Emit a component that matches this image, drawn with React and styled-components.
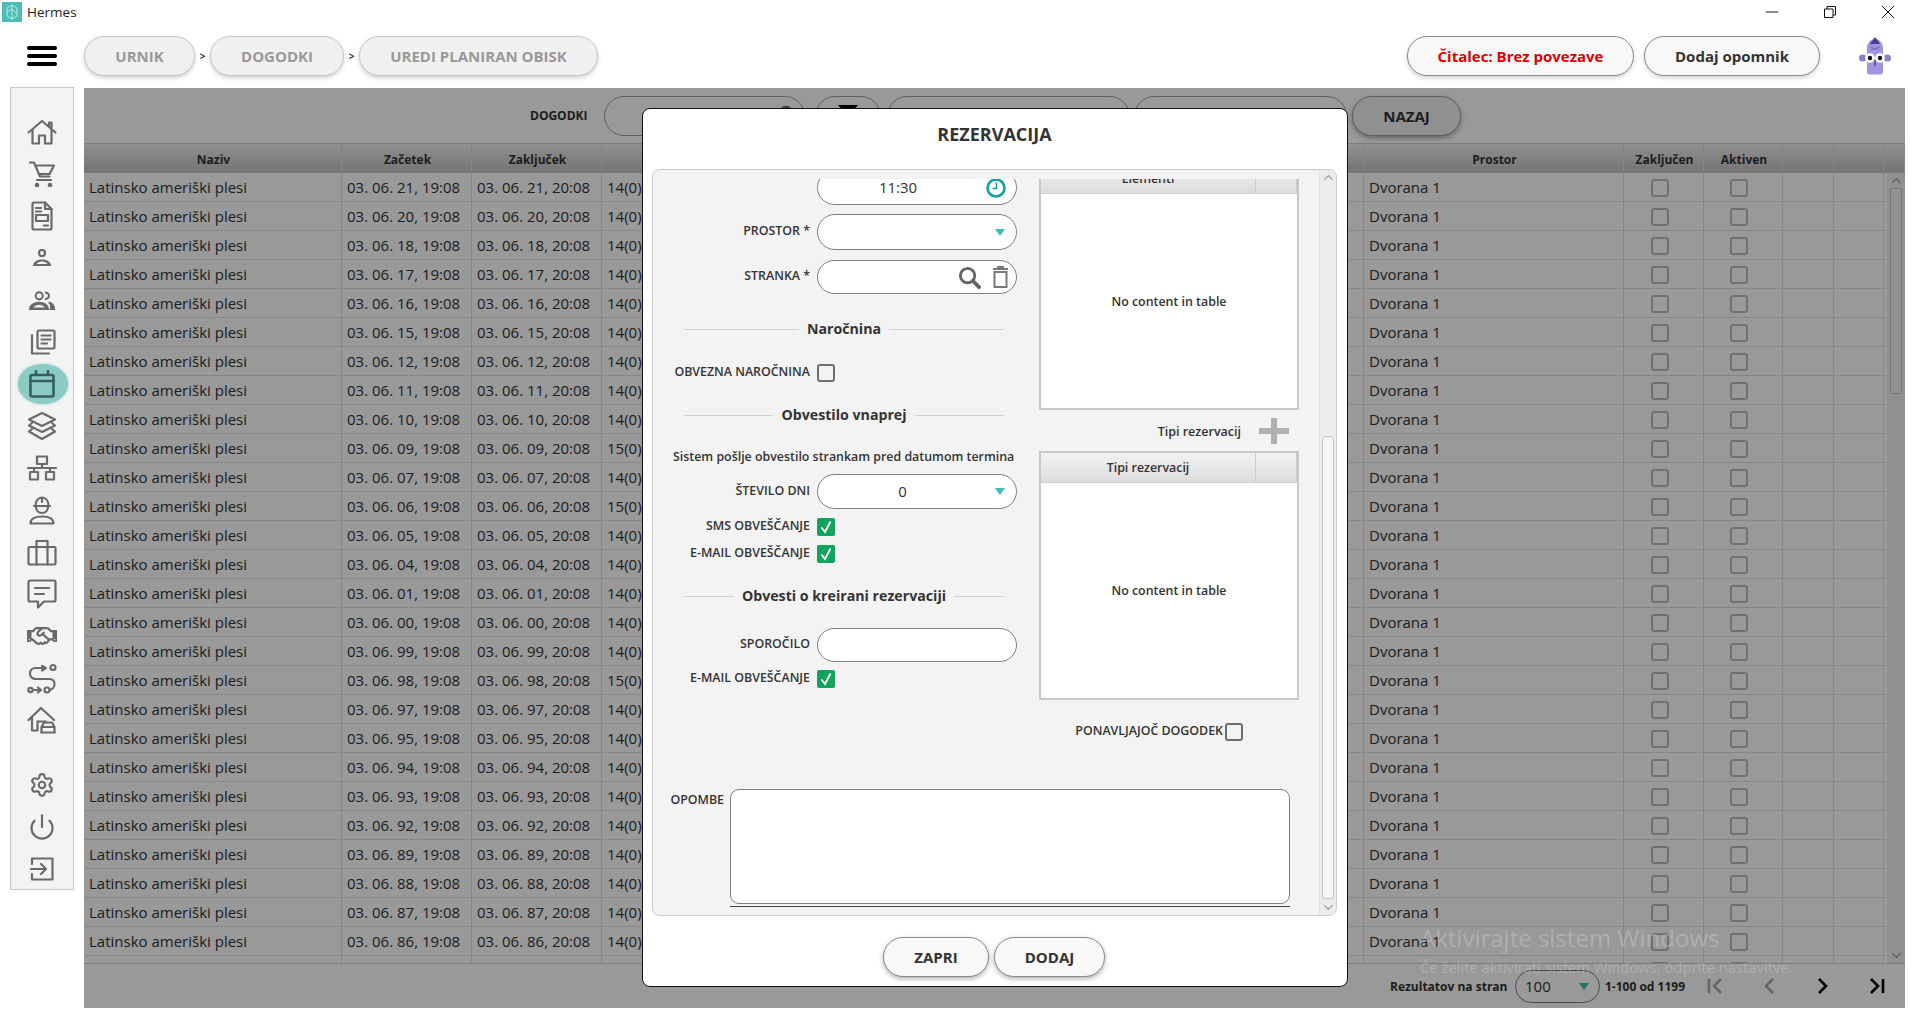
import React from 'react'
import styled, { createGlobalStyle } from 'styled-components'
import { FaRegHandshake } from 'react-icons/fa'
import { Settings, Power, ChevronUp, ChevronDown } from 'lucide-react'

const GlobalStyle = createGlobalStyle`
  html, body {
    margin: 0;
    background: #fff;
    overflow: hidden;
  }
  * {
    box-sizing: border-box;
  }
  body {
    font-family: 'Open Sans', 'Liberation Sans', sans-serif;
    color: #333;
  }
`

const Page = styled.div`
  display: flex;
  flex-direction: column;
  height: 1023px;
  position: relative;
  width: 1919px;
`

const TitleBar = styled.header`
  align-items: center;
  display: flex;
  flex: 0 0 24px;
  font-size: 13.5px;
  gap: 5px;
  padding: 0 2px;
  color: #222;
`

const WindowControls = styled.div`
  display: flex;
  margin-left: auto;
`

const WindowButton = styled.span`
  align-items: center;
  color: #111;
  display: flex;
  height: 24px;
  justify-content: center;
  width: 58px;
`

const Toolbar = styled.div`
  align-items: center;
  display: flex;
  flex: 0 0 64px;
  padding: 0 28px 0 27px;
`

const Hamburger = styled.div`
  display: flex;
  flex-direction: column;
  gap: 3.5px;
  margin-right: 27px;
  width: 30px;
`

const HamburgerBar = styled.span`
  background: #000;
  border-radius: 3px;
  height: 4.5px;
`

const Pill = styled.div`
  align-items: center;
  background: ${p => (p.$muted ? '#f0f0f0' : '#f8f8f8')};
  border: 1px solid ${p => (p.$muted ? '#c6c6c6' : '#8a8a8a')};
  border-radius: 22px;
  box-shadow: 0 2px 4px rgba(0, 0, 0, 0.18);
  color: ${p => p.$color || '#333'};
  display: flex;
  flex: 0 0 ${p => p.$width}px;
  font-size: 15px;
  font-weight: 700;
  height: 40px;
  justify-content: center;
`

const Crumb = styled.span`
  font-size: 10px;
  font-weight: 700;
  text-align: center;
  width: 15px;
`

const ToolbarRight = styled.div`
  align-items: center;
  display: flex;
  gap: 10px;
  margin-left: auto;
`

const Mascot = styled.svg`
  display: block;
  margin-left: 29px;
`

const Body = styled.div`
  display: flex;
  flex: 1;
  min-height: 0;
  padding: 0 14px 15px 10px;
`

const Sidebar = styled.nav`
  background: #f3f3f3;
  border: 1px solid #c8c8c8;
  flex: 0 0 64px;
  height: 803px;
  margin-right: 10px;
  margin-top: -1px;
  padding-top: 23px;
`

const NavGroup = styled.div`
  margin-top: ${p => p.$top || 0}px;
`

const NavItem = styled.div`
  align-items: center;
  color: #6a6a6a;
  display: flex;
  height: 42px;
  justify-content: center;
  position: relative;
  ${p =>
    p.$active &&
    `
    color: #35605e;
    &::before {
      background: #8ccac6;
      border-radius: 50%;
      box-shadow: 0 0 3px rgba(80, 160, 155, 0.5);
      content: '';
      height: 40px;
      left: 6.5px;
      position: absolute;
      top: 1px;
      width: 50px;
    }
    svg { position: relative; }
  `}
`

const Icon = styled.svg`
  display: block;
  fill: none;
  stroke: currentColor;
  stroke-linecap: round;
  stroke-linejoin: round;
  stroke-width: 2.2;
`

const Content = styled.main`
  background: #fff;
  display: flex;
  flex: 1;
  flex-direction: column;
  position: relative;
`

const FilterBar = styled.div`
  align-items: center;
  display: flex;
  flex: 0 0 55px;
  padding-left: 446px;
`

const FilterLabel = styled.span`
  font-size: 12px;
  font-weight: 700;
  margin-right: 17px;
  width: 57px;
`

const FilterBox = styled.div`
  align-items: flex-start;
  background: #fff;
  border: 1px solid #9e9e9e;
  border-radius: 20px;
  color: #9a9a9a;
  display: flex;
  flex: 0 0 ${p => p.$width}px;
  height: 40px;
  justify-content: ${p => p.$justify || 'flex-start'};
  margin-right: ${p => p.$right || 0}px;
  padding: 8px 7px 0;
`

const BackButton = styled(Pill)`
  background: #f0f0f0;
  border-color: #9e9e9e;
  box-shadow: 0 2px 5px rgba(0, 0, 0, 0.35);
  font-size: 15px;
  margin-left: 5px;
`

const columns = '258px 130px 130px 130px 632px 260px 80px 79px 51px 50px 21px'

const TableHead = styled.div`
  background: linear-gradient(#f0f0f0, #c2c2c2);
  border-bottom: 1px solid #c6c6c6;
  border-top: 1px solid #d0d0d0;
  display: grid;
  flex: 0 0 30px;
  grid-template-columns: ${columns};
`

const HeadCell = styled.div`
  align-items: center;
  border-right: 1px solid #dcdcdc;
  display: flex;
  font-size: 12px;
  font-weight: 700;
  justify-content: center;
  padding: 3px 0 0 2px;
`

const TableBody = styled.div`
  flex: 0 0 790px;
  overflow: hidden;
  position: relative;
`

const Row = styled.div`
  border-bottom: 1px solid #e2e2e2;
  display: grid;
  grid-template-columns: ${columns};
  height: 29px;
`

const Cell = styled.div`
  align-items: center;
  border-right: 1px solid #e2e2e2;
  display: flex;
  font-size: 15px;
  justify-content: ${p => (p.$center ? 'center' : 'flex-start')};
  overflow: hidden;
  padding: ${p => (p.$center ? '1px 8px 0 0' : '0 0 0 5px')};
  white-space: nowrap;
`

const TableScroll = styled.div`
  align-items: center;
  background: #f0f0f0;
  bottom: 0;
  color: #9a9a9a;
  display: flex;
  flex-direction: column;
  position: absolute;
  right: 0;
  top: 0;
  width: 18px;
`

const ScrollThumb = styled.div`
  background: #f6f6f6;
  border: 1px solid #c4c4c4;
  border-radius: 3px;
  flex: 0 0 ${p => p.$height}px;
  margin-top: ${p => p.$top}px;
  width: 12.5px;
`

const ScrollEnd = styled.div`
  line-height: 0;
  margin-top: auto;
`

const Box = styled.span`
  background: transparent;
  border: 2px solid ${p => p.$line || '#6e6e6e'};
  border-radius: 3px;
  display: block;
  flex: 0 0 18px;
  height: 18px;
  width: 18px;
`

const Footer = styled.div`
  align-items: center;
  border-top: 1px solid #cfcfcf;
  display: flex;
  flex: 0 0 45px;
  font-size: 12px;
  font-weight: 700;
  padding-left: 1306px;
  white-space: nowrap;
`

const FooterText = styled.span`
  flex: 0 0 ${p => p.$width}px;
`

const PageSize = styled.div`
  align-items: center;
  border: 1px solid #7e7e7e;
  border-radius: 17px;
  display: flex;
  flex: 0 0 85px;
  font-size: 15px;
  font-weight: 400;
  height: 33px;
  justify-content: space-between;
  margin: 0 5px 0 6px;
  padding: 0 10px 0 9px;
`

const Triangle = styled.span`
  border-left: 5px solid transparent;
  border-right: 5px solid transparent;
  border-top: 7px solid #3fbdb0;
  display: block;
  height: 0;
  width: 0;
`

const FieldTriangle = styled(Triangle)`
  margin-right: 4px;
`

const Pager = styled.div`
  display: flex;
  margin-left: 4px;
`

const PagerButton = styled.span`
  align-items: center;
  color: ${p => (p.$off ? '#a8a8a8' : '#000')};
  display: flex;
  justify-content: center;
  width: 53.5px;
`

const Scrim = styled.div`
  background: rgba(0, 0, 0, 0.4);
  inset: 0;
  position: absolute;
`

const Modal = styled.section`
  background: #fff;
  border: 1px solid #111;
  border-radius: 8px;
  display: flex;
  flex-direction: column;
  height: 879px;
  left: 558px;
  position: absolute;
  top: 20px;
  width: 706px;
`

const ModalTitle = styled.h2`
  align-items: center;
  display: flex;
  flex: 0 0 60px;
  font-size: 18px;
  font-weight: 700;
  justify-content: center;
  margin: 0;
  padding: 0 1px 10px 0;
`

const Panel = styled.div`
  background: #f3f3f3;
  border: 1.5px solid #cacaca;
  border-radius: 8px;
  display: flex;
  flex: 0 0 747px;
  margin: 0 10px 0 9px;
  overflow: hidden;
`

const Viewport = styled.div`
  flex: 1;
  margin-top: 9px;
  min-width: 0;
  overflow: hidden;
`

const FormGrid = styled.div`
  display: grid;
  grid-template-columns: 387px 258px;
  margin-top: -9px;
`

const Column = styled.div`
  display: flex;
  flex-direction: column;
`

const Field = styled.div`
  align-items: center;
  column-gap: 7px;
  display: grid;
  grid-template-columns: 157px 200px;
  margin-top: ${p => p.$top || 0}px;
`

const Label = styled.label`
  font-size: 12.4px;
  font-weight: 600;
  line-height: 14px;
  padding-bottom: 2px;
  text-align: right;
  white-space: nowrap;
`

const Input = styled.div`
  align-items: center;
  background: #fff;
  border: 1px solid #7e7e7e;
  border-radius: 18px;
  display: flex;
  font-size: 15px;
  height: ${p => p.$height}px;
  padding: 0 10px;
  position: relative;
  width: 200px;
`

const InputValue = styled.span`
  flex: 1;
  line-height: 18px;
  padding: 0 18px 2px 0;
  text-align: center;
`

const InputIcons = styled.div`
  align-items: center;
  color: #666;
  display: flex;
  gap: 11px;
  margin-left: auto;
  margin-right: -3px;
`

const Divider = styled.div`
  align-items: center;
  color: #333;
  display: flex;
  font-size: 14.2px;
  font-weight: 700;
  gap: 8px;
  height: 20px;
  margin-left: 31px;
  margin-top: ${p => p.$top || 0}px;
  padding-bottom: 2px;
  white-space: nowrap;
  width: 320px;
  &::before,
  &::after {
    background: #cfcfcf;
    content: '';
    flex: 1;
    height: 1px;
    margin-top: 2px;
  }
`

const Hint = styled.p`
  font-size: 12.4px;
  font-weight: 600;
  height: 18px;
  line-height: 16px;
  margin: 24px 0 0 20px;
  white-space: nowrap;
`

const Check = styled.span`
  align-items: center;
  background: #12a45c;
  border-radius: 2px;
  color: #fff;
  display: flex;
  height: 18px;
  justify-content: center;
  width: 18px;
`

const ListTable = styled.div`
  background: #fff;
  border: 2.5px solid #c8c8c8;
  display: flex;
  flex-direction: column;
  height: ${p => p.$height}px;
  margin-left: -1px;
  margin-top: ${p => p.$top}px;
  width: 260px;
`

const ListHead = styled.div`
  background: linear-gradient(#f2f2f2, #dcdcdc);
  border-bottom: 1px solid #d0d0d0;
  display: grid;
  flex: 0 0 30px;
  font-size: 12.4px;
  font-weight: 600;
  grid-template-columns: 1fr 41px;
`

const ListHeadCell = styled.div`
  align-items: center;
  border-right: 1px solid #ccc;
  display: flex;
  justify-content: center;
`

const EmptyNote = styled.div`
  align-items: center;
  display: flex;
  flex: 1;
  font-size: 12.4px;
  font-weight: 600;
  justify-content: center;
`

const TypesBar = styled.div`
  align-items: center;
  color: #b0b0b0;
  display: flex;
  font-size: 12.5px;
  font-weight: 600;
  gap: 18px;
  height: 26px;
  justify-content: flex-end;
  margin-top: 8px;
  padding-right: 9px;
`

const TypesLabel = styled.span`
  color: #333;
`

const RepeatRow = styled.div`
  align-items: center;
  display: flex;
  gap: 2px;
  justify-content: flex-end;
  margin-top: 23px;
  padding-right: 55px;
`

const NotesRow = styled.div`
  align-items: flex-start;
  display: flex;
  gap: 6px;
  margin-top: 48px;
`

const NotesLabel = styled(Label)`
  flex: 0 0 71px;
  margin-top: 4px;
`

const NotesWrap = styled.div`
  border-bottom: 1px solid #444;
  padding-bottom: 2px;
  width: 560px;
`

const NotesArea = styled.div`
  background: #fff;
  border: 1px solid #7e7e7e;
  border-radius: 9px;
  height: 115px;
`

const PanelScroll = styled.div`
  align-items: center;
  background: #ececec;
  border-left: 1px solid #e2e2e2;
  color: #9a9a9a;
  display: flex;
  flex: 0 0 17px;
  flex-direction: column;
`

const ModalActions = styled.div`
  align-items: center;
  display: flex;
  flex: 1;
  gap: 5px;
  justify-content: center;
  padding: 12px 2px 0 0;
`

const ActionButton = styled(Pill)`
  box-shadow: 0 2px 5px rgba(0, 0, 0, 0.3);
`

const Watermark = styled.div`
  color: rgba(255, 255, 255, 0.22);
  left: 1420px;
  pointer-events: none;
  position: absolute;
  top: 922px;
  white-space: nowrap;
`

const WatermarkTitle = styled.div`
  font-size: 24px;
  line-height: 32px;
`

const WatermarkText = styled.div`
  font-size: 14.8px;
  line-height: 20px;
  margin-top: 3px;
`

const rowData = [
  ['21', 14], ['20', 14], ['18', 14], ['17', 14], ['16', 14], ['15', 14], ['12', 14],
  ['11', 14], ['10', 14], ['09', 15], ['07', 14], ['06', 15], ['05', 14], ['04', 14],
  ['01', 14], ['00', 14], ['99', 14], ['98', 15], ['97', 14], ['95', 14], ['94', 14],
  ['93', 14], ['92', 14], ['89', 14], ['88', 14], ['87', 14], ['86', 14]
]

const Logo = () => (
  <svg width="20" height="20" viewBox="0 0 20 20">
    <rect width="20" height="20" fill="#4cbdb5" />
    <path d="M10 3L15 6V14L10 17L5 14V6ZM10 3V17M5 10L10 7L15 12" fill="none" stroke="#d8f2ef" strokeWidth="0.8" />
  </svg>
)

const HomeIcon = () => (
  <Icon width="30" height="26" viewBox="0 0 30 26">
    <path d="M1.5 13.5L15 2L28.5 13.5M22 7V3.5H24.5V9" />
    <path d="M5.5 11V24.5H12V16.5H18V24.5H24.5V11" />
  </Icon>
)

const CartIcon = () => (
  <Icon width="26" height="26" viewBox="0 0 26 26">
    <path d="M1 1.5H5L11 15.5H20.5M6.5 4.5H25L20.5 13H9.5M8 19H22" />
    <circle cx="8" cy="24" r="1.2" fill="currentColor" />
    <circle cx="21" cy="24" r="1.2" fill="currentColor" />
  </Icon>
)

const DocIcon = () => (
  <Icon width="22" height="30" viewBox="0 0 22 30">
    <path d="M14 1.5H3A1.5 1.5 0 0 0 1.5 3V27A1.5 1.5 0 0 0 3 28.5H19A1.5 1.5 0 0 0 20.5 27V8Z" />
    <path d="M14 1.5V8H20.5M5 7H10M5 10.5H10M5 14H17V20H5ZM13 24.5H17" />
  </Icon>
)

const PersonIcon = () => (
  <Icon width="20" height="18" viewBox="0 0 20 18">
    <circle cx="10" cy="4" r="3" />
    <path d="M1 17H19C19 13 15 10.5 10 10.5C5 10.5 1 13 1 17Z" fill="currentColor" stroke="none" />
    <path d="M4.5 15H15.5C14.5 13.5 12.5 12.6 10 12.6C7.5 12.6 5.5 13.5 4.5 15Z" fill="#f3f3f3" stroke="none" />
  </Icon>
)

const PeopleIcon = () => (
  <Icon width="26" height="19" viewBox="0 0 28 20">
    <circle cx="11" cy="5" r="3.8" />
    <path d="M18 1.5C20.5 2 21.5 3.5 21.5 5C21.5 6.5 20.5 8 18 8.5" />
    <path d="M1 19.5C1 15 5.5 12.5 11 12.5C16.5 12.5 20.5 15 20.5 19.5Z" fill="currentColor" />
    <path d="M22 12.5C25 13.5 27 16 27 19.5H23" fill="currentColor" />
    <path d="M5 17.5H16.5C15.5 15.5 13.5 14.6 11 14.6C8.5 14.6 6 15.5 5 17.5Z" fill="#f3f3f3" stroke="none" />
  </Icon>
)

const DocsIcon = () => (
  <Icon width="28" height="26" viewBox="0 0 28 26">
    <rect x="9.5" y="1.5" width="17" height="18" rx="1.5" />
    <path d="M13.5 6.5H22.5M13.5 10.5H22.5M13.5 14.5H19M4 6V24.5H21" />
  </Icon>
)

const CalendarIcon = () => (
  <Icon width="26" height="28" viewBox="0 0 26 28" style={{ strokeWidth: 2.6 }}>
    <rect x="1.5" y="5" width="23" height="21.5" rx="1.5" />
    <path d="M1.5 11H24.5M7 1V5M19 1V5" />
  </Icon>
)

const LayersIcon = () => (
  <Icon width="30" height="30" viewBox="0 0 30 30">
    <path d="M15 2L28 8.5L15 15L2 8.5Z" />
    <path d="M5 12L2 14.5L15 21L28 14.5L25 12" />
    <path d="M5 18L2 20.5L15 28L28 20.5L25 18" />
  </Icon>
)

const NetworkIcon = () => (
  <Icon width="30" height="26" viewBox="0 0 30 26">
    <rect x="10" y="1.5" width="10" height="7.5" />
    <rect x="3" y="17" width="8" height="7.5" />
    <rect x="19" y="17" width="8" height="7.5" />
    <path d="M15 9V13M1 13H29M7 13V17M23 13V17" />
  </Icon>
)

const WorkerIcon = () => (
  <Icon width="26" height="29" viewBox="0 0 26 29">
    <path d="M6.5 10C6.5 5 9 1.5 13 1.5C17 1.5 19.5 5 19.5 10ZM5 10H21M13 1.5V6M7 10.5C7 14.5 9.5 17 13 17C16.5 17 19 14.5 19 10.5" />
    <path d="M1.5 27.5H24.5C24.5 23 20 20.5 13 20.5C6 20.5 1.5 23 1.5 27.5Z" />
  </Icon>
)

const BriefcaseIcon = () => (
  <Icon width="30" height="27" viewBox="0 0 30 27">
    <rect x="1.5" y="8" width="27" height="17.5" rx="1" />
    <path d="M9.5 8V2H20.5V8M9.5 8V25.5M20.5 8V25.5" />
  </Icon>
)

const ChatIcon = () => (
  <Icon width="30" height="30" viewBox="0 0 30 30">
    <path d="M3 1.5H27A1.5 1.5 0 0 1 28.5 3V21A1.5 1.5 0 0 1 27 22.5H17L11 28.5V22.5H3A1.5 1.5 0 0 1 1.5 21V3A1.5 1.5 0 0 1 3 1.5Z" />
    <path d="M8 9H22M8 15H17" />
  </Icon>
)

const RouteIcon = () => (
  <Icon width="30" height="31" viewBox="0 0 30 31">
    <circle cx="26" cy="4.5" r="2.5" />
    <circle cx="20" cy="27" r="2.5" />
    <circle cx="3.5" cy="27" r="2.2" />
    <path d="M19 5H9C5 5 3 7.5 3 10.5C3 13.5 5 16 9 16H22C25.5 16 27.5 18 27.5 21C27.5 24 25.5 26.5 23 27M7 27H13M15 3L19 5L15 7.5M11 24.5L14 27L11 29.5" />
  </Icon>
)

const GarageIcon = () => (
  <Icon width="30" height="28" viewBox="0 0 30 28">
    <path d="M1.5 14L14 2L27 14M5 11V24.5H10.5V15.5H19" />
    <path d="M14.5 26.5V21L17 16.5H25L27.5 21V26.5M14.5 21H27.5" />
    <path d="M14.5 26.5H27.5" />
  </Icon>
)

const ExitIcon = () => (
  <Icon width="24" height="24" viewBox="0 0 24 24">
    <path d="M2 7V1.5H22.5V22.5H2V17M1 12H15.5M11 7L16 12L11 17" />
  </Icon>
)

const navMain = [
  <HomeIcon />, <CartIcon />, <DocIcon />, <PersonIcon />, <PeopleIcon />, <DocsIcon />, <CalendarIcon />,
  <LayersIcon />, <NetworkIcon />, <WorkerIcon />, <BriefcaseIcon />, <ChatIcon />,
  <FaRegHandshake size={30} />, <RouteIcon />, <GarageIcon />
]

const navBottom = [
  <Settings size={26} strokeWidth={2} />,
  <Power size={28} strokeWidth={1.9} />,
  <ExitIcon />
]

const CheckMark = () => (
  <Check>
    <svg width="14" height="14" viewBox="0 0 14 14">
      <path d="M2.5 7.5L6 12L11.5 1.5" fill="none" stroke="#fff" strokeWidth="1.8" />
    </svg>
  </Check>
)

const ClockIcon = () => (
  <svg width="20" height="20" viewBox="0 0 20 20">
    <circle cx="10" cy="10" r="8.5" fill="none" stroke="#10a59a" strokeWidth="2.6" />
    <path d="M10.5 4.5V10.5H6.5" fill="none" stroke="#10a59a" strokeWidth="1.6" />
  </svg>
)

const SearchGlyph = ({ size }) => (
  <svg width={size} height={size} viewBox="0 0 24 24">
    <circle cx="10" cy="10" r="7.5" fill="none" stroke="#666" strokeWidth="3" />
    <path d="M15.5 15.5L22 22" fill="none" stroke="#666" strokeWidth="4" strokeLinecap="round" />
  </svg>
)

const TrashIcon = () => (
  <svg width="17" height="22" viewBox="0 0 17 22">
    <path d="M1 3H16M6 3V1H11V3" fill="none" stroke="#777" strokeWidth="1.8" />
    <rect x="2.5" y="6" width="12" height="15" fill="none" stroke="#777" strokeWidth="2" />
  </svg>
)

const PlusIcon = () => (
  <svg width="30" height="26" viewBox="0 0 30 26">
    <path d="M15 1V25M1 13H29" fill="none" stroke="currentColor" strokeWidth="6" strokeLinecap="round" />
  </svg>
)

const FunnelIcon = () => (
  <svg width="20" height="14" viewBox="0 0 20 14">
    <path d="M0 0H20L12 9V14H8V9Z" fill="#000" />
  </svg>
)

const PagerGlyph = ({ d }) => (
  <svg width="18" height="18" viewBox="0 0 18 18">
    <path d={d} fill="none" stroke="currentColor" strokeWidth="2.6" />
  </svg>
)

const MascotIcon = () => (
  <Mascot width="32" height="38" viewBox="0 0 32 38">
    <circle cx="3.6" cy="21" r="3.6" fill="#8b7fcf" />
    <circle cx="28.4" cy="21" r="3.6" fill="#8b7fcf" />
    <path d="M8 10C9 5 12 2 16 2C20 2 23 5 24 10V35C24 36.5 23 37.5 21.5 37.5H10.5C9 37.5 8 36.5 8 35Z" fill="#a194de" />
    <path d="M13 4L16 0L19 4L21 7H11Z" fill="#4a3f96" />
    <path d="M11 10L20 13M12 13L21 10" stroke="#6d61b8" strokeWidth="0.8" />
    <circle cx="11" cy="21" r="4.8" fill="#fff" />
    <circle cx="21" cy="21" r="4.8" fill="#fff" />
    <circle cx="11" cy="21" r="2.2" fill="#111" />
    <circle cx="21" cy="21" r="2.2" fill="#111" />
    <path d="M16 23V29" stroke="#2a2460" strokeWidth="1" />
  </Mascot>
)

const Table = () => (
  <>
    <TableHead>
      <HeadCell>Naziv</HeadCell>
      <HeadCell>Začetek</HeadCell>
      <HeadCell>Zaključek</HeadCell>
      <HeadCell />
      <HeadCell />
      <HeadCell>Prostor</HeadCell>
      <HeadCell>Zaključen</HeadCell>
      <HeadCell>Aktiven</HeadCell>
      <HeadCell />
      <HeadCell />
      <HeadCell />
    </TableHead>
    <TableBody>
      {[...rowData, ['', 14]].map(([day, seats], i) => (
        <Row key={i}>
          <Cell>{day && 'Latinsko ameriški plesi'}</Cell>
          <Cell>{day && `03. 06. ${day}, 19:08`}</Cell>
          <Cell>{day && `03. 06. ${day}, 20:08`}</Cell>
          <Cell>{day && `${seats}(0)`}</Cell>
          <Cell />
          <Cell>{day && 'Dvorana 1'}</Cell>
          <Cell $center><Box $line="#bdbdbd" /></Cell>
          <Cell $center><Box $line="#bdbdbd" /></Cell>
          <Cell />
          <Cell />
          <Cell />
        </Row>
      ))}
      <TableScroll>
        <ChevronUp size={15} />
        <ScrollThumb $top={0} $height={206} />
        <ScrollEnd><ChevronDown size={15} /></ScrollEnd>
      </TableScroll>
    </TableBody>
  </>
)

const ReservationForm = () => (
  <Panel>
    <Viewport>
      <FormGrid>
        <Column>
          <Field>
            <span />
            <Input $height={35}>
              <InputValue>11:30</InputValue>
              <ClockIcon />
            </Input>
          </Field>
          <Field $top={9}>
            <Label>PROSTOR *</Label>
            <Input $height={36}><InputIcons><FieldTriangle /></InputIcons></Input>
          </Field>
          <Field $top={10}>
            <Label>STRANKA *</Label>
            <Input $height={34}>
              <InputIcons>
                <SearchGlyph size={23} />
                <TrashIcon />
              </InputIcons>
            </Input>
          </Field>
          <Divider $top={25}>Naročnina</Divider>
          <Field $top={25}>
            <Label>OBVEZNA NAROČNINA</Label>
            <Box />
          </Field>
          <Divider $top={23}>Obvestilo vnaprej</Divider>
          <Hint>Sistem pošlje obvestilo strankam pred datumom termina</Hint>
          <Field $top={7}>
            <Label>ŠTEVILO DNI</Label>
            <Input $height={35}>
              <InputValue>0</InputValue>
              <InputIcons><FieldTriangle /></InputIcons>
            </Input>
          </Field>
          <Field $top={9}>
            <Label>SMS OBVEŠČANJE</Label>
            <CheckMark />
          </Field>
          <Field $top={9}>
            <Label>E-MAIL OBVEŠČANJE</Label>
            <CheckMark />
          </Field>
          <Divider $top={23}>Obvesti o kreirani rezervaciji</Divider>
          <Field $top={22}>
            <Label>SPOROČILO</Label>
            <Input $height={34} />
          </Field>
          <Field $top={8}>
            <Label>E-MAIL OBVEŠČANJE</Label>
            <CheckMark />
          </Field>
        </Column>
        <Column>
          <ListTable $top={-8} $height={248}>
            <ListHead>
              <ListHeadCell>Elementi</ListHeadCell>
              <ListHeadCell />
            </ListHead>
            <EmptyNote>No content in table</EmptyNote>
          </ListTable>
          <TypesBar>
            <TypesLabel>Tipi rezervacij</TypesLabel>
            <PlusIcon />
          </TypesBar>
          <ListTable $top={7} $height={249}>
            <ListHead>
              <ListHeadCell>Tipi rezervacij</ListHeadCell>
              <ListHeadCell />
            </ListHead>
            <EmptyNote>No content in table</EmptyNote>
          </ListTable>
          <RepeatRow>
            <Label>PONAVLJAJOČ DOGODEK</Label>
            <Box />
          </RepeatRow>
        </Column>
      </FormGrid>
      <NotesRow>
        <NotesLabel>OPOMBE</NotesLabel>
        <NotesWrap>
          <NotesArea />
        </NotesWrap>
      </NotesRow>
    </Viewport>
    <PanelScroll>
      <ChevronUp size={15} />
      <ScrollThumb $top={251} $height={463} />
      <ScrollEnd><ChevronDown size={15} /></ScrollEnd>
    </PanelScroll>
  </Panel>
)

export default function App() {
  return (
    <Page>
      <GlobalStyle />
      <TitleBar>
        <Logo />
        Hermes
        <WindowControls>
          <WindowButton>
            <svg width="12" height="12" viewBox="0 0 12 12"><path d="M0 6H12" stroke="currentColor" /></svg>
          </WindowButton>
          <WindowButton>
            <svg width="12" height="12" viewBox="0 0 12 12"><path d="M.5 3H9V11.5H.5ZM3 3V.5H11.5V9H9" fill="none" stroke="currentColor" /></svg>
          </WindowButton>
          <WindowButton>
            <svg width="12" height="12" viewBox="0 0 12 12"><path d="M0 0L12 12M12 0L0 12" stroke="currentColor" /></svg>
          </WindowButton>
        </WindowControls>
      </TitleBar>

      <Toolbar>
        <Hamburger>
          <HamburgerBar />
          <HamburgerBar />
          <HamburgerBar />
        </Hamburger>
        <Pill $muted $color="#999" $width={111}>URNIK</Pill>
        <Crumb>&gt;</Crumb>
        <Pill $muted $color="#999" $width={134}>DOGODKI</Pill>
        <Crumb>&gt;</Crumb>
        <Pill $muted $color="#999" $width={239}>UREDI PLANIRAN OBISK</Pill>
        <ToolbarRight>
          <Pill $color="#e00000" $width={227}>Čitalec: Brez povezave</Pill>
          <Pill $width={176}>Dodaj opomnik</Pill>
          <MascotIcon />
        </ToolbarRight>
      </Toolbar>

      <Body>
        <Sidebar>
          <NavGroup>
            {navMain.map((icon, i) => (
              <NavItem key={i} $active={i === 6}>{icon}</NavItem>
            ))}
          </NavGroup>
          <NavGroup $top={23}>
            {navBottom.map((icon, i) => (
              <NavItem key={i}>{icon}</NavItem>
            ))}
          </NavGroup>
        </Sidebar>

        <Content>
          <FilterBar>
            <FilterLabel>DOGODKI</FilterLabel>
            <FilterBox $width={201} $justify="flex-end" $right={10}><SearchGlyph size={19} /></FilterBox>
            <FilterBox $width={66} $justify="center" $right={6}><FunnelIcon /></FilterBox>
            <FilterBox $width={243} $right={4} />
            <FilterBox $width={213} />
            <BackButton $width={109}>NAZAJ</BackButton>
          </FilterBar>

          <Table />

          <Footer>
            <FooterText $width={119}>Rezultatov na stran</FooterText>
            <PageSize>100<Triangle /></PageSize>
            <FooterText $width={78}>1-100 od 1199</FooterText>
            <Pager>
              <PagerButton $off><PagerGlyph d="M2 2V16M14 2L7 9L14 16" /></PagerButton>
              <PagerButton $off><PagerGlyph d="M13 2L6 9L13 16" /></PagerButton>
              <PagerButton><PagerGlyph d="M5 2L12 9L5 16" /></PagerButton>
              <PagerButton><PagerGlyph d="M16 2V16M4 2L11 9L4 16" /></PagerButton>
            </Pager>
          </Footer>

          <Scrim />

          <Modal>
            <ModalTitle>REZERVACIJA</ModalTitle>
            <ReservationForm />
            <ModalActions>
              <ActionButton $width={106}>ZAPRI</ActionButton>
              <ActionButton $width={111}>DODAJ</ActionButton>
            </ModalActions>
          </Modal>
        </Content>
      </Body>

      <Watermark>
        <WatermarkTitle>Aktivirajte sistem Windows</WatermarkTitle>
        <WatermarkText>Če želite aktivirati sistem Windows, odprite nastavitve.</WatermarkText>
      </Watermark>
    </Page>
  )
}
